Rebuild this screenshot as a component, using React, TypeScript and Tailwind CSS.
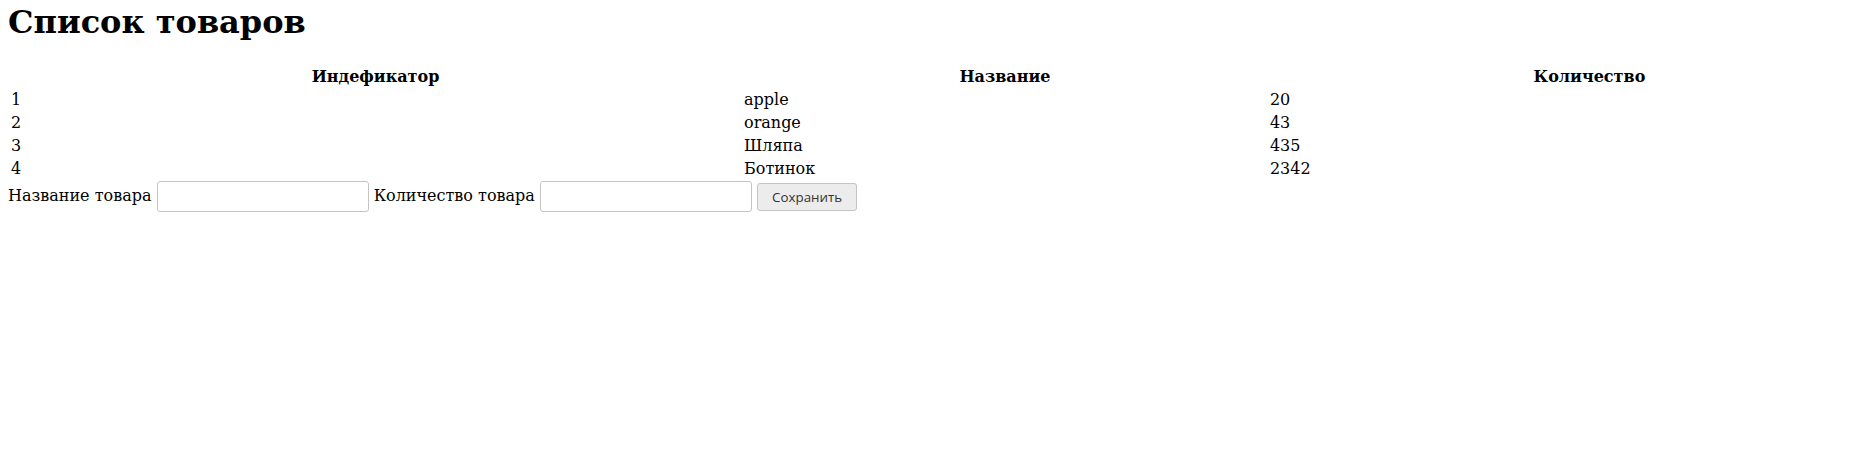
import React from "react";

const rows = [
  { id: 1, name: "apple", qty: 20 },
  { id: 2, name: "orange", qty: 43 },
  { id: 3, name: "Шляпа", qty: 435 },
  { id: 4, name: "Ботинок", qty: 2342 },
];

export default function App() {
  return (
    <div className="min-h-[465px] overflow-hidden bg-white px-2 text-[16px] leading-[normal] text-black font-['DejaVu_Serif',serif]">
      <h1 className="m-0 pt-[3px] pb-[23px] text-[32px] font-bold leading-[normal]">Список товаров</h1>
      <table className="w-[1904px] border-separate border-spacing-[2px]">
        <thead>
          <tr>
            <th className="p-[1px] text-center font-bold">Индефикатор</th>
            <th className="p-[1px] text-center font-bold">Название</th>
            <th className="p-[1px] text-center font-bold">Количество</th>
          </tr>
        </thead>
        <tbody>
          {rows.map((r) => (
            <tr key={r.id}>
              <td className="p-[1px] text-left">{r.id}</td>
              <td className="p-[1px] text-left">{r.name}</td>
              <td className="p-[1px] text-left">{r.qty}</td>
            </tr>
          ))}
        </tbody>
      </table>
      <div className="whitespace-nowrap">
        Название товара{" "}
        <input
          type="text"
          className="h-[31px] w-[212px] rounded-[3px] border border-[#c4c4c4] bg-white px-1 text-[13.33px] align-middle outline-none"
        />{" "}
        Количество товара{" "}
        <input
          type="text"
          className="h-[31px] w-[212px] rounded-[3px] border border-[#c4c4c4] bg-white px-1 text-[13.33px] align-middle outline-none"
        />{" "}
        <button
          type="button"
          className="h-[28px] w-[100px] rounded-[3px] border border-[#c4c4c4] bg-[#ececec] text-[13.33px] text-[#333] align-middle font-['Open_Sans',sans-serif]"
        >
          Сохранить
        </button>
      </div>
    </div>
  );
}
